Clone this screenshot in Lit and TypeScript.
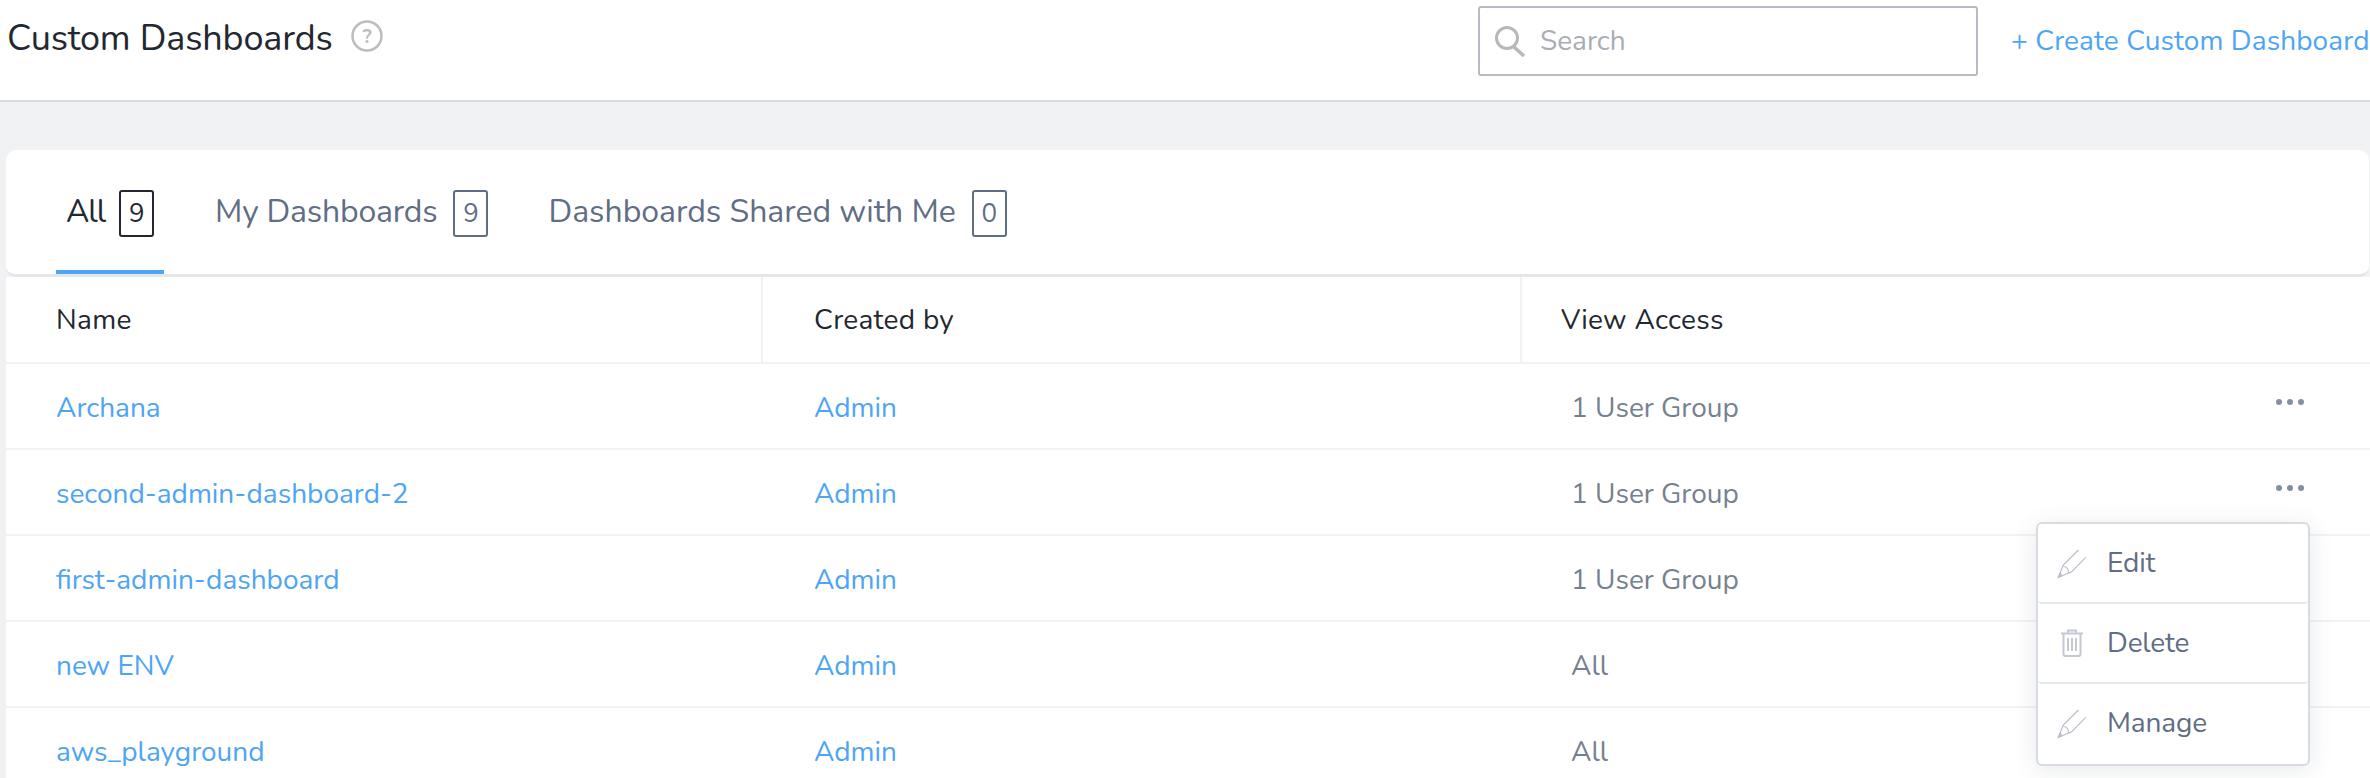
import { LitElement, html, css, svg } from "lit";
import { customElement } from "lit/decorators.js";

const rows = [
  ["Archana", "1 User Group", true],
  ["second-admin-dashboard-2", "1 User Group", true],
  ["first-admin-dashboard", "1 User Group", false],
  ["new ENV", "All", false],
  ["aws_playground", "All", false],
] as const;

const pencil = svg`<svg class="mi" width="30" height="30" viewBox="0 0 30 30" fill="none" stroke="#b9bec9" stroke-width="1.200"><path d="M21.300 2 L6.300 17 L1.300 29.300 L14.700 23.700 L28.700 9.300"/><path d="M6.300 18.500 C9.500 18.500 11.500 20.500 11.500 25"/><path d="M1.300 29.300 L4.500 25.500 M1.300 29.300 L6 27.500 M1.300 29.300 L3.500 24.500" stroke-width="1.200"/></svg>`;
const trash = svg`<svg class="mi" width="30" height="30" viewBox="0 0 30 30" fill="none" stroke="#c3c8d2" stroke-width="2"><path d="M4 5.5 H26"/><path d="M11 5 V2.5 H19 V5"/><path d="M6.5 6 V26 Q6.5 28 8.500 28 H21.500 Q23.500 28 23.500 26 V6"/><path d="M11 10 V23 M15 10 V23 M19 10 V23"/></svg>`;

@customElement("app-root")
export class AppRoot extends LitElement {
  static styles = css`
    :host { display: block; width: 2370px; height: 778px; overflow: hidden; background: #f0f2f4; font-family: "Nunito", "Lato", "Noto Sans", sans-serif; position: relative; }
    * { box-sizing: border-box; }
    .top { height: 102px; background: #fff; border-bottom: 2px solid #d8dbe2; display: flex; align-items: flex-start; }
    .title { margin: 19px 0 0 7px; font-size: 36px; line-height: 40px; color: #23272f; white-space: nowrap; letter-spacing: -0.15px; }
    .help { margin: 20px 0 0 18px; flex: none; }
    .spacer { flex: 1; }
    .search { width: 500px; height: 70px; margin: 6px 0 0 0; border: 2px solid #b7bbc6; border-radius: 3px; display: flex; align-items: center; padding-left: 14px; gap: 14px; font-size: 28px; color: #a9adb6; }
    .create { margin: 21px 0 0 33px; width: 359px; white-space: nowrap; font-size: 28px; line-height: 40px; color: #4ea5f3; letter-spacing: 0.1px; }
    .card { margin: 48px 0 0 6px; height: 640px; display: flex; flex-direction: column; }
    .tabs { flex: none; height: 127px; margin-right: 1px; padding-left: 50px; display: flex; background: #fff; border-bottom: 3px solid #e4e6ea; border-radius: 10px; }
    .tab { height: 124px; display: flex; align-items: flex-start; font-size: 32px; color: #5f6e84; padding: 42px 10px 0 10px; margin-right: 40px; line-height: 40px; white-space: nowrap; letter-spacing: -0.02px; }
    .tab.on { color: #23272f; border-bottom: 4px solid #4ea5f3; width: 108px; margin-right: 41px; padding-left: 10px; letter-spacing: -1px; }
    .tab.mine { letter-spacing: -0.2px; }
    .badge { width: 35px; height: 47px; margin: -2px 0 0 16px; border: 2px solid #5f6e84; border-radius: 3px; display: flex; align-items: center; justify-content: center; font-size: 26px; flex: none; letter-spacing: 0; }
    .tab.on .badge { border-color: #23272f; margin-left: 14px; }
    .table { flex: 1; background: #fff; }
    .row { display: grid; grid-template-columns: 757px 759px 1fr; height: 86px; border-bottom: 2px solid #f1f2f4; align-items: center; position: relative; font-size: 28px; padding-top: 4px; }
    .head { height: 87px; color: #23272f; letter-spacing: 0.3px; padding-top: 0; }
    .head .cell { height: 100%; display: flex; align-items: center; padding: 0 0 0 50px; border-right: 2px solid #f1f2f4; }
    .head .cell:nth-child(2) { padding-left: 51px; }
    .head .cell:nth-child(3) { border: 0; padding-left: 39px; }
    .link { color: #4ea5f3; padding-left: 50px; }
    .link.c2 { padding-left: 51px; }
    .access { color: #76818f; padding-left: 49px; }
    .dots { position: absolute; left: 2270px; top: 35px; display: flex; gap: 5px; }
    .dots i { width: 6px; height: 6px; border-radius: 50%; background: #84909f; }
    .menu { position: absolute; left: 2036px; top: 522px; width: 274px; height: 244px; background: #fff; border: 2px solid #d8dbe2; border-radius: 6px; box-shadow: 0 4px 24px rgba(60,70,90,0.12); display: flex; flex-direction: column; }
    .mitem { height: 80px; display: flex; align-items: center; padding-left: 19px; gap: 20px; font-size: 28px; letter-spacing: -0.15px; color: #5f6e84; border-bottom: 2px solid #e6e8ec; border-radius: 0 0 4px 4px; }
    .mitem:last-child { border-bottom: 0; padding-bottom: 2px; }
    .mi { flex: none; }
  `;
  render() {
    return html`
      <div class="top">
        <div class="title">Custom Dashboards</div>
        <svg class="help" width="32" height="32" viewBox="0 0 32 32" fill="none"><circle cx="16" cy="16" r="14.500" stroke="#bdbdbd" stroke-width="2.500"/><text x="16" y="23" text-anchor="middle" font-size="20" font-weight="700" font-family="Nunito, Lato, sans-serif" fill="#bdbdbd">?</text></svg>
        <div class="spacer"></div>
        <div class="search">
          <svg width="32" height="32" viewBox="0 0 32 32" fill="none" stroke="#b8b8b8" stroke-width="3"><circle cx="13" cy="13" r="10.500"/><path d="M20 22 L30 31" stroke-width="3.500"/></svg>
          <span>Search</span>
        </div>
        <div class="create">+ Create Custom Dashboard</div>
      </div>
      <div class="card">
        <div class="tabs">
          <div class="tab on">All<span class="badge">9</span></div>
          <div class="tab mine">My Dashboards<span class="badge">9</span></div>
          <div class="tab">Dashboards Shared with Me<span class="badge">0</span></div>
        </div>
        <div class="table">
          <div class="row head">
            <div class="cell">Name</div><div class="cell">Created by</div><div class="cell">View Access</div>
          </div>
          ${rows.map(([n, a, d]) => html`
            <div class="row">
              <div class="link">${n}</div>
              <div class="link c2">Admin</div>
              <div class="access">${a}</div>
              ${d ? html`<div class="dots"><i></i><i></i><i></i></div>` : null}
            </div>`)}
        </div>
      </div>
      <div class="menu">
        <div class="mitem">${pencil}<span>Edit</span></div>
        <div class="mitem">${trash}<span>Delete</span></div>
        <div class="mitem">${pencil}<span>Manage</span></div>
      </div>
    `;
  }
}
